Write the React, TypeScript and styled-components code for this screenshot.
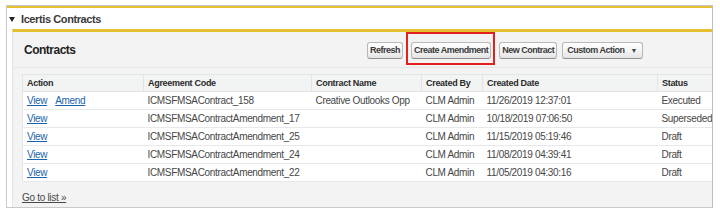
import React from "react";
import styled, { createGlobalStyle } from "styled-components";

const Global = createGlobalStyle`
  html, body { margin: 0; padding: 0; background: #ffffff; }
  body { font-family: "Liberation Sans", Arial, sans-serif; }
`;

const Outer = styled.section`
  box-sizing: border-box;
  margin: 5px 0 0 6px;
  width: 707px;
  border: 1px solid #c9c9c9;
  border-right-color: #bdbdbd;
  background: #ffffff;
`;

const SectionHeader = styled.div`
  box-sizing: border-box;
  height: 23px;
  border-top: 2px solid #e4bf2f;
  display: flex;
  align-items: center;
  padding-left: 2px;
  gap: 3px;
  font-size: 11px;
  font-weight: bold;
  letter-spacing: -0.4px;
  color: #3a3a3a;
`;

const Caret = styled.span`
  display: inline-block;
  width: 0;
  height: 0;
  border-left: 3px solid transparent;
  border-right: 3px solid transparent;
  border-top: 5px solid #222;
  margin: 1px 3px 0 0;
`;

const Panel = styled.div`
  margin-left: 5px;
  background: #f3f3f3;
  border-top: 3px solid #e4bf2f;
  border-left: 1px solid #e3e3e3;
`;

const PanelHeader = styled.div`
  box-sizing: border-box;
  height: 36px;
  display: flex;
  align-items: center;
  border-bottom: 1px solid #e6e6e6;
`;

const Title = styled.h3`
  margin: 0;
  box-sizing: border-box;
  width: 354px;
  padding-left: 11px;
  font-size: 12px;
  font-weight: bold;
  letter-spacing: -0.5px;
  color: #1f1f1f;
`;

const Buttons = styled.div`
  display: flex;
  align-items: center;
  gap: 5px;
  padding-top: 1px;
`;

const Btn = styled.button`
  box-sizing: border-box;
  height: 17px;
  padding: 0 2px;
  border: 1px solid #b8b8b8;
  border-bottom-color: #8f8f8f;
  border-radius: 3px;
  background: linear-gradient(#ffffff, #f1f1f1 60%, #e4e4e4);
  font-family: "Liberation Sans", Arial, sans-serif;
  font-size: 9px;
  font-weight: bold;
  letter-spacing: -0.5px;
  color: #3a3a3a;
  display: inline-flex;
  align-items: center;
  gap: 6px;
  cursor: pointer;
`;

const Highlight = styled.span<{ $on?: boolean }>`
  position: relative;
  display: inline-flex;
  margin: 0 ${(p) => (p.$on ? "3px" : "0")};
  &::after {
    content: "";
    display: ${(p) => (p.$on ? "block" : "none")};
    position: absolute;
    left: -5px;
    right: -4px;
    top: -10px;
    bottom: -6px;
    border: 2px solid #e3211c;
  }
`;

const Arrow = styled.span`
  font-size: 7px;
  color: #444;
  margin-right: 3px;
`;

const Body = styled.div`
  padding: 6px 0 0 9px;
`;

const Table = styled.table`
  width: 100%;
  border-collapse: collapse;
  table-layout: fixed;
  background: #ffffff;
  border: 1px solid #e2e4e6;
  border-right: none;
  font-size: 10px;
  letter-spacing: -0.33px;
`;

const Th = styled.th`
  height: 16px;
  padding: 0 0 0 4px;
  text-align: left;
  background: #f2f3f3;
  border-left: 1px solid #e0e2e4;
  border-bottom: 1px solid #e0e2e4;
  font-size: 9px;
  letter-spacing: -0.3px;
  font-weight: bold;
  color: #2a2a2a;
  &:first-child { border-left: none; }
`;

const Td = styled.td`
  height: 17px;
  padding: 0 0 0 4px;
  border-bottom: 1px solid #e6e8ea;
  color: #464646;
  white-space: nowrap;
  overflow: hidden;
`;

const Link = styled.a<{ $gap?: boolean }>`
  color: #1a64ad;
  text-decoration: underline;
  margin-right: ${(p) => (p.$gap ? "8px" : "0")};
`;

const Footer = styled.div`
  box-sizing: border-box;
  height: 25px;
  padding: 5px 0 0 9px;
  display: flex;
  align-items: center;
  font-size: 10px;
  letter-spacing: -0.3px;
`;

const GoLink = styled.a`
  color: #4a4a4a;
  text-decoration: underline;
`;

type Row = {
  amend?: boolean;
  code: string;
  name: string;
  by: string;
  date: string;
  status: string;
};

const rows: Row[] = [
  { amend: true, code: "ICMSFMSAContract_158", name: "Creative Outlooks Opp", by: "CLM Admin", date: "11/26/2019 12:37:01", status: "Executed" },
  { code: "ICMSFMSAContractAmendment_17", name: "", by: "CLM Admin", date: "10/18/2019 07:06:50", status: "Superseded" },
  { code: "ICMSFMSAContractAmendment_25", name: "", by: "CLM Admin", date: "11/15/2019 05:19:46", status: "Draft" },
  { code: "ICMSFMSAContractAmendment_24", name: "", by: "CLM Admin", date: "11/08/2019 04:39:41", status: "Draft" },
  { code: "ICMSFMSAContractAmendment_22", name: "", by: "CLM Admin", date: "11/05/2019 04:30:16", status: "Draft" },
];

const cols = [121, 168, 110, 61, 175];

export default function App() {
  return (
    <>
      <Global />
      <Outer>
        <SectionHeader>
          <Caret />
          Icertis Contracts
        </SectionHeader>
        <Panel>
          <PanelHeader>
            <Title>Contracts</Title>
            <Buttons>
              <Btn>Refresh</Btn>
              <Highlight $on>
                <Btn>Create Amendment</Btn>
              </Highlight>
              <Btn>New Contract</Btn>
              <Btn>
                &nbsp;Custom Action<Arrow>▼</Arrow>
              </Btn>
            </Buttons>
          </PanelHeader>
          <Body>
            <Table>
              <colgroup>
                {cols.map((w, i) => (
                  <col key={i} style={{ width: w }} />
                ))}
                <col />
              </colgroup>
              <thead>
                <tr>
                  <Th>Action</Th>
                  <Th>Agreement Code</Th>
                  <Th>Contract Name</Th>
                  <Th>Created By</Th>
                  <Th>Created Date</Th>
                  <Th>Status</Th>
                </tr>
              </thead>
              <tbody>
                {rows.map((r) => (
                  <tr key={r.code}>
                    <Td>
                      <Link href="#" $gap={r.amend}>View</Link>
                      {r.amend && <Link href="#">Amend</Link>}
                    </Td>
                    <Td>{r.code}</Td>
                    <Td>{r.name}</Td>
                    <Td>{r.by}</Td>
                    <Td>{r.date}</Td>
                    <Td>{r.status}</Td>
                  </tr>
                ))}
              </tbody>
            </Table>
          </Body>
          <Footer>
            <GoLink href="#">Go to list »</GoLink>
          </Footer>
        </Panel>
      </Outer>
    </>
  );
}
